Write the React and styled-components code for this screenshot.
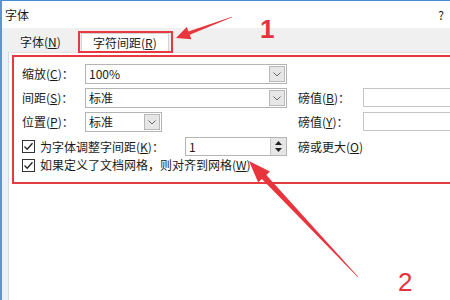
import React from "react";
import styled, { createGlobalStyle } from "styled-components";

const Global = createGlobalStyle`
  html, body { margin: 0; padding: 0; background: #fff; }
  body { font-family: "Noto Sans CJK SC", "Noto Sans", sans-serif; font-size: 12px; color: #1a1a1a; }
  * { box-sizing: border-box; }
`;

const Window = styled.div`
  position: relative;
  width: 450px;
  height: 300px;
  overflow: hidden;
  background: #f0f0f0;
  border-top: 1px solid #4a8ad0;
  border-left: 2px solid #5a95d6;
  display: flex;
  flex-direction: column;
`;

const TitleBar = styled.div`
  height: 27px;
  flex: none;
  background: #fff;
  display: flex;
  align-items: center;
  justify-content: space-between;
  padding: 0 6px 0 3px;
  font-size: 12px;
  line-height: 1;
`;

const TabStrip = styled.div`
  height: 24px;
  flex: none;
  display: flex;
  align-items: flex-end;
  padding-left: 10px;
`;

const Tab = styled.span`
  height: 20px;
  display: flex;
  align-items: center;
  padding: 0 8px;
  line-height: 1;
  white-space: nowrap;
`;

const RedFrame = styled.span`
  margin-left: 9px;
  height: 22px;
  border: 2px solid #e53a40;
  padding: 0 2px 0 1px;
  display: flex;
  align-items: stretch;
  margin-bottom: -1px;
  position: relative;
  z-index: 1;
`;

const SelectedTab = styled.span`
  width: 88px;
  background: #fff;
  border: 1px solid #d4d4d4;
  border-bottom: none;
  display: flex;
  align-items: center;
  justify-content: center;
  line-height: 1;
  white-space: nowrap;
`;

const Panel = styled.div`
  flex: 1;
  margin-left: 6px;
  background: #fff;
  border-left: 1px solid #d9d9d9;
  border-top: 1px solid #e3e3e3;
  padding: 2px 0 0 3px;
`;

const RedBox = styled.div`
  width: 460px;
  border: 2px solid #e53a40;
  border-right: none;
  padding: 7px 0 10px 8px;
  display: grid;
  grid-template-columns: 63px 100px 102px 11px 65px 120px;
  grid-template-rows: 24px 24px 25px 21px 14px;
  align-items: start;
`;

const Label = styled.span`
  grid-column: ${(p) => p.col || "auto"};
  height: ${(p) => p.h || 20}px;
  display: flex;
  align-items: center;
  line-height: 1;
  white-space: nowrap;
`;

const Combo = styled.div`
  grid-column: ${(p) => p.col};
  width: ${(p) => (p.w ? `${p.w}px` : "100%")};
  height: 20px;
  border: 1px solid #b4b4b4;
  background: #fff;
  display: flex;
  align-items: center;
  padding: 0 1px 0 3px;
  line-height: 1;
`;

const ComboText = styled.span`
  flex: 1;
`;

const DropBtn = styled.span`
  width: 16px;
  height: 16px;
  background: #e6e6e6;
  border: 1px solid #b8b8b8;
  display: flex;
  align-items: center;
  justify-content: center;
`;

const TextBox = styled.div`
  grid-column: ${(p) => p.col};
  width: 100%;
  height: 19px;
  border: 1px solid #c4c4c4;
  background: #fff;
`;

const Spin = styled.div`
  grid-column: 3;
  width: 102px;
  height: 19px;
  border: 1px solid #b4b4b4;
  background: #fff;
  display: flex;
  align-items: center;
  padding-left: 3px;
  line-height: 1;
`;

const SpinBtns = styled.span`
  width: 16px;
  height: 17px;
  background: #e6e6e6;
  border-left: 1px solid #c8c8c8;
  display: flex;
  flex-direction: column;
  align-items: center;
  justify-content: space-evenly;
`;

const CheckRow = styled.label`
  grid-column: ${(p) => p.span};
  height: ${(p) => p.h || 20}px;
  display: flex;
  align-items: center;
  gap: 5px;
  white-space: nowrap;
  line-height: 1;
`;

const Box = styled.span`
  width: 13px;
  height: 13px;
  border: 1px solid #333;
  background: #fff;
  display: flex;
  align-items: center;
  justify-content: center;
  flex: none;
`;

const Overlay = styled.svg`
  position: absolute;
  left: -2px;
  top: -1px;
  width: 450px;
  height: 300px;
  pointer-events: none;
  z-index: 5;
`;

const Num = styled.span`
  position: absolute;
  left: ${(p) => p.x}px;
  top: ${(p) => p.y}px;
  color: #e5323b;
  font-family: "Liberation Sans", Arial, sans-serif;
  font-size: 26px;
  font-weight: ${(p) => (p.bold ? 700 : 400)};
  line-height: 1;
  z-index: 6;
`;

const Chevron = () => (
  <svg width="8" height="5" viewBox="0 0 8 5">
    <polyline points="0.5,0.5 4,4 7.5,0.5" fill="none" stroke="#666" strokeWidth="1" />
  </svg>
);

const Check = () => (
  <svg width="11" height="11" viewBox="0 0 11 11">
    <polyline points="1.5,5.5 4.2,8.3 9.5,2.3" fill="none" stroke="#222" strokeWidth="1.3" />
  </svg>
);

const Tri = ({ up }) => (
  <svg width="7" height="4" viewBox="0 0 7 4">
    <polygon points={up ? "0,4 3.5,0 7,4" : "0,0 3.5,4 7,0"} fill="#222" />
  </svg>
);

function arrowPoints(tail, tip, headLen, headHalf, shaftTail, shaftHead) {
  const dx = tip[0] - tail[0];
  const dy = tip[1] - tail[1];
  const len = Math.hypot(dx, dy);
  const ux = dx / len;
  const uy = dy / len;
  const nx = -uy;
  const ny = ux;
  const bx = tip[0] - ux * headLen;
  const by = tip[1] - uy * headLen;
  const pts = [
    [tail[0] + nx * shaftTail, tail[1] + ny * shaftTail],
    [bx + nx * shaftHead, by + ny * shaftHead],
    [bx + nx * headHalf, by + ny * headHalf],
    tip,
    [bx - nx * headHalf, by - ny * headHalf],
    [bx - nx * shaftHead, by - ny * shaftHead],
    [tail[0] - nx * shaftTail, tail[1] - ny * shaftTail],
  ];
  return pts.map((p) => `${p[0].toFixed(1)},${p[1].toFixed(1)}`).join(" ");
}

const U = styled.u`
  text-underline-offset: 1px;
`;

export default function App() {
  return (
    <>
      <Global />
      <Window>
        <TitleBar>
          <span>字体</span>
          <span>?</span>
        </TitleBar>
        <TabStrip>
          <Tab>字体(<U>N</U>)</Tab>
          <RedFrame>
            <SelectedTab>字符间距(<U>R</U>)</SelectedTab>
          </RedFrame>
        </TabStrip>
        <Panel>
          <RedBox>
            <Label col="1">缩放(<U>C</U>)：</Label>
            <Combo col="2 / 4">
              <ComboText>100%</ComboText>
              <DropBtn><Chevron /></DropBtn>
            </Combo>

            <Label col="1">间距(<U>S</U>)：</Label>
            <Combo col="2 / 4">
              <ComboText>标准</ComboText>
              <DropBtn><Chevron /></DropBtn>
            </Combo>
            <Label col="5">磅值(<U>B</U>)：</Label>
            <TextBox col="6" />

            <Label col="1">位置(<U>P</U>)：</Label>
            <Combo col="2" w={77}>
              <ComboText>标准</ComboText>
              <DropBtn><Chevron /></DropBtn>
            </Combo>
            <Label col="5">磅值(<U>Y</U>)：</Label>
            <TextBox col="6" />

            <CheckRow span="1 / 3" h={19}>
              <Box><Check /></Box>
              <span>为字体调整字间距(<U>K</U>)：</span>
            </CheckRow>
            <Spin>
              <ComboText>1</ComboText>
              <SpinBtns><Tri up /><Tri /></SpinBtns>
            </Spin>
            <Label col="5 / 7" h={19}>磅或更大(<U>O</U>)</Label>

            <CheckRow span="1 / 7" h={14}>
              <Box><Check /></Box>
              <span>如果定义了文档网格，则对齐到网格(<U>W</U>)</span>
            </CheckRow>
          </RedBox>
        </Panel>
        <Overlay viewBox="0 0 450 300">
          <polygon points={arrowPoints([232, 17], [176, 38], 14, 6.5, 0.3, 1.8)} fill="#e8343c" />
          <polygon points={arrowPoints([358, 277], [249, 161], 22, 8, 0.3, 3)} fill="#e8343c" />
        </Overlay>
        <Num x={258} y={15} bold>1</Num>
        <Num x={396} y={268}>2</Num>
      </Window>
    </>
  );
}
